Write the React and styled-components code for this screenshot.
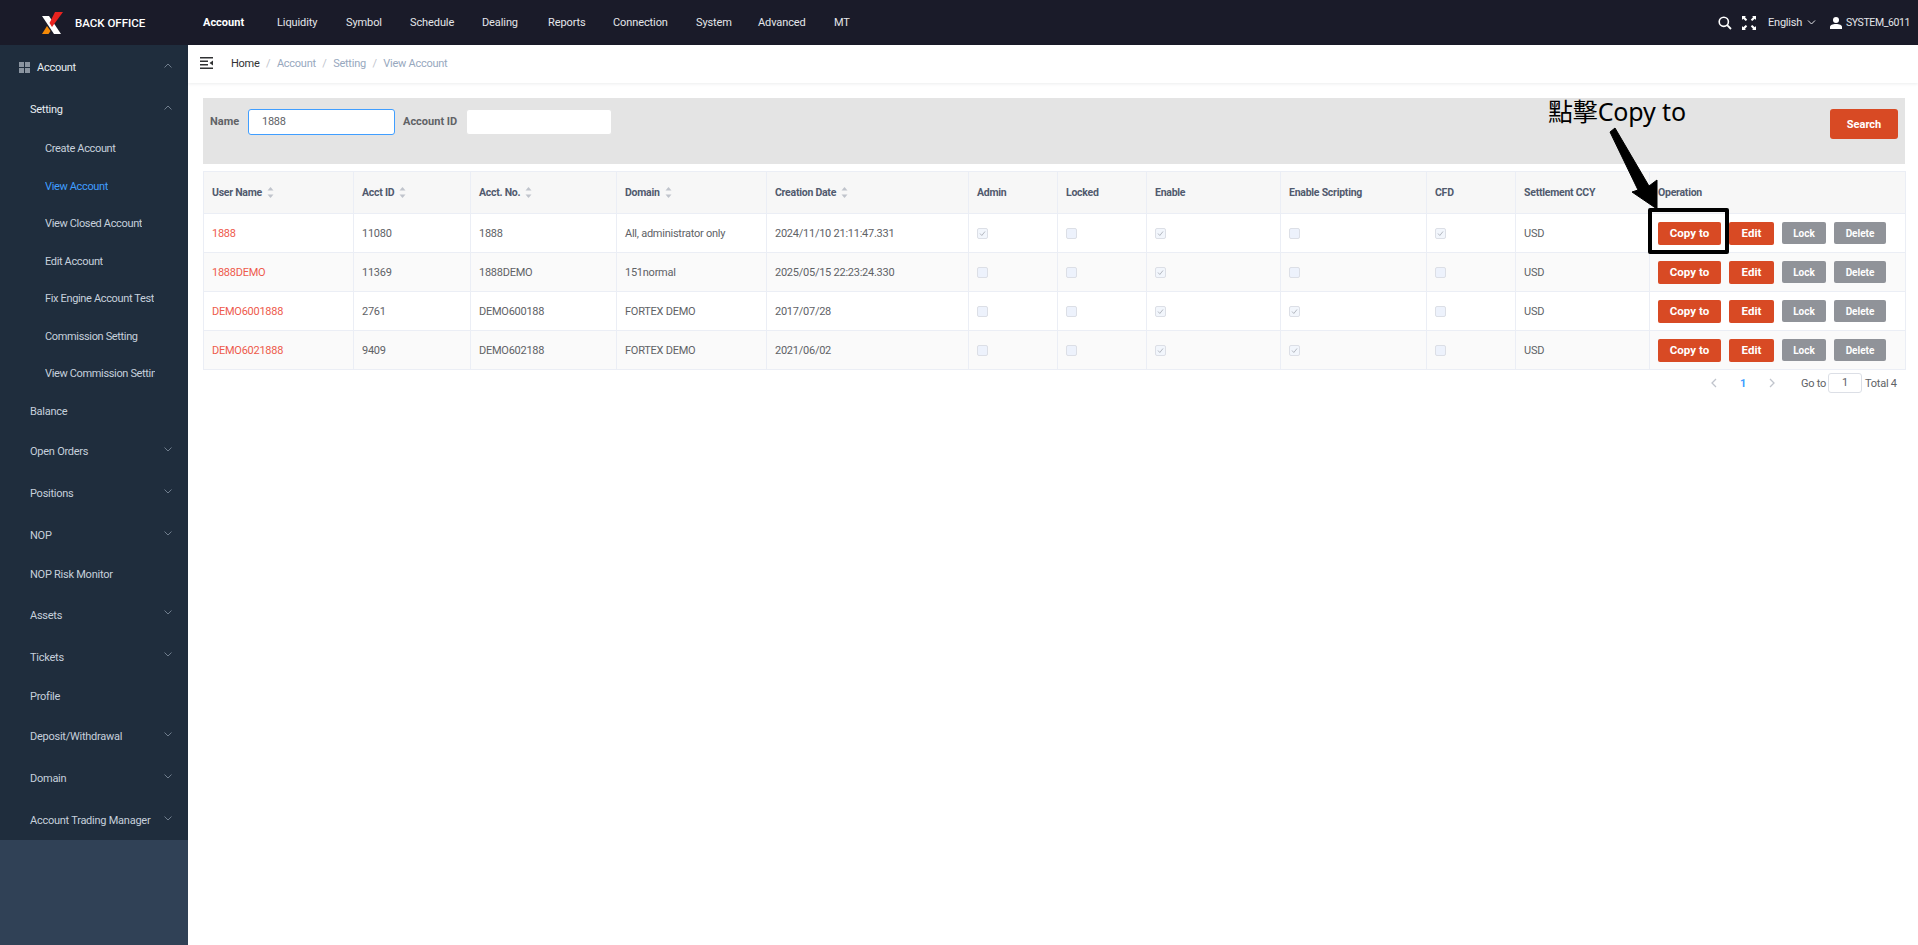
import React from "react";
import styled, { createGlobalStyle } from "styled-components";

const GlobalStyle = createGlobalStyle`
  html, body {
    margin: 0;
    padding: 0;
    background: #fff;
    font-family: Roboto, "Noto Sans", sans-serif;
    font-size: 11px;
    letter-spacing: -0.25px;
  }
  * {
    box-sizing: border-box;
  }
`;

const Page = styled.div`
  position: relative;
  width: 1918px;
  height: 945px;
  overflow: hidden;
  display: flex;
  flex-direction: column;
`;

const TopBar = styled.header`
  height: 45px;
  flex: none;
  background: #1a1b29;
  display: flex;
  align-items: center;
  color: #fff;
  padding-right: 8px;
`;

const Brand = styled.div`
  width: 203px;
  flex: none;
  display: flex;
  align-items: center;
  padding-left: 41px;
  gap: 10px;
  font-weight: 500;
  font-size: 11.500px;
  letter-spacing: 0;
`;

const TopNav = styled.nav`
  display: flex;
  flex: 1;
`;

const TopLink = styled.span`
  width: ${(p) => p.$w}px;
  color: ${(p) => (p.$active ? "#fff" : "#e4e6ea")};
  font-weight: ${(p) => (p.$active ? 700 : 400)};
  letter-spacing: ${(p) => (p.$active ? 0 : -0.1)}px;
`;

const TopRight = styled.div`
  display: flex;
  align-items: center;
  color: #e4e6ea;
`;

const UserName = styled.span`
  font-size: 10.500px;
  letter-spacing: -0.4px;
`;

const IconBtn = styled.span`
  display: flex;
  margin-right: ${(p) => p.$mr || 0}px;
`;

const Body = styled.div`
  flex: 1;
  display: flex;
  min-height: 0;
`;

const Sidebar = styled.aside`
  width: 188px;
  flex: none;
  background: #304156;
  color: #bfcbd9;
`;

const Menu = styled.div`
  background: #1f2d3d;
  height: 795px;
`;

const MenuRow = styled.div`
  height: ${(p) => (p.$leaf ? 37.5 : 42)}px;
  padding-left: ${(p) => p.$indent}px;
  padding-top: ${(p) => (p.$leaf ? 2 : 3)}px;
  display: flex;
  align-items: center;
  position: relative;
  color: ${(p) => p.$color || "#c6d0dc"};
  white-space: nowrap;
`;

// long names are cut at the arrow column, as the real menu does
const MenuText = styled.span`
  display: block;
  max-width: 110px;
  overflow: hidden;
  letter-spacing: -0.35px;
`;

const RootText = styled.span`
  display: block;
`;

const Chevron = styled.svg`
  position: absolute;
  right: 16px;
  top: 50%;
  margin-top: -3.500px;
  width: 8px;
  height: 5px;
`;

const GridIcon = styled.svg`
  width: 11px;
  height: 11px;
  margin-right: 7px;
`;

const Main = styled.main`
  flex: 1;
  min-width: 0;
`;

const Crumbs = styled.div`
  height: 38px;
  display: flex;
  align-items: center;
  padding-left: 12px;
  padding-bottom: 2px;
  box-shadow: 0 1px 3px rgba(0, 21, 41, 0.08);
`;

const Crumb = styled.span`
  color: ${(p) => (p.$home ? "#303133" : "#97a8be")};
`;

const CrumbSlash = styled.span`
  color: #c0c4cc;
  margin: 0 6.500px;
`;

const Hamburger = styled.svg`
  width: 13px;
  height: 12px;
  margin-right: 18px;
`;

const Content = styled.div`
  padding: 15px 13px 0 15px;
`;

const FilterBar = styled.div`
  height: 66px;
  background: #e4e4e4;
  display: flex;
  align-items: flex-start;
  padding: 11px 7px 0;
`;

const FilterLabel = styled.label`
  width: ${(p) => p.$w}px;
  line-height: 26px;
  font-weight: 700;
  letter-spacing: 0;
  color: #606266;
`;

const FilterInput = styled.div`
  width: ${(p) => p.$w}px;
  height: 26px;
  line-height: 24px;
  padding-left: 13px;
  margin-right: 8px;
  background: #fff;
  border-radius: 3px;
  border: 1px solid ${(p) => (p.$focus ? "#409eff" : "#e4e4e4")};
  color: #606266;
`;

const SearchButton = styled.button`
  margin-left: auto;
  width: 68px;
  height: 30px;
  border: none;
  border-radius: 3px;
  background: #d84a24;
  color: #fff;
  font: 700 11px Roboto, sans-serif;
`;

const Table = styled.table`
  margin-top: 7px;
  width: 1702px;
  table-layout: fixed;
  border-collapse: collapse;
`;

const ColWidth = styled.col`
  width: ${(p) => p.$w}px;
`;

const Th = styled.th`
  height: 42px;
  padding: 0 0 0 8px;
  background: #f7f7f7;
  border: 1px solid #ebeef5;
  color: #515a6e;
  font-size: 10.500px;
  font-weight: 700;
  text-align: left;
  white-space: nowrap;
`;

const Tr = styled.tr`
  background: ${(p) => (p.$even ? "#fafafa" : "#fff")};
`;

const Td = styled.td`
  height: 39px;
  padding: 0 0 0 8px;
  border: 1px solid #ebeef5;
  color: ${(p) => (p.$link ? "#ee5a4c" : "#606266")};
  white-space: nowrap;
`;

const SortCaret = styled.svg`
  width: 7px;
  height: 13px;
  margin-left: 5px;
  vertical-align: middle;
`;

const Check = styled.span`
  display: block;
  width: 11px;
  height: 11px;
  border: 1px solid #dcdfe6;
  border-radius: 2px;
  background: ${(p) => (p.$on ? "#f2f6fc" : "#edf2fc")};
`;

const CheckMark = styled.svg`
  display: block;
  width: 9px;
  height: 9px;
`;

const Actions = styled.div`
  display: flex;
  align-items: center;
  gap: 8px;
`;

const ActionButton = styled.button`
  width: ${(p) => p.$w}px;
  height: ${(p) => (p.$grey ? 22 : 23)}px;
  border: none;
  border-radius: 2px;
  padding: 0;
  background: ${(p) => (p.$grey ? "#909399" : "#d84a24")};
  color: #fff;
  font: 700 ${(p) => (p.$grey ? 10 : 11.5)}px Roboto, sans-serif;
`;

const Pager = styled.div`
  display: flex;
  align-items: center;
  margin-top: 3px;
  height: 20px;
  padding-left: 1508px;
  color: #606266;
  white-space: nowrap;
`;

const PagerArrow = styled.svg`
  width: 6px;
  height: 10px;
`;

const PagerCurrent = styled.span`
  color: #409eff;
  font-weight: 700;
  margin: 0 23px;
`;

const PagerLabel = styled.span`
  width: 27px;
  margin-left: ${(p) => p.$ml}px;
`;

const PagerInput = styled.div`
  width: 34px;
  height: 20px;
  margin-right: 3px;
  border: 1px solid #dcdfe6;
  border-radius: 3px;
  line-height: 18px;
  text-align: center;
`;

const Note = styled.div`
  position: absolute;
  left: 1548px;
  top: 94px;
  color: #000;
  font: 25px/1.4 "Noto Sans", "Noto Sans CJK TC", sans-serif;
  letter-spacing: -0.15px;
  white-space: nowrap;
`;

const HighlightBox = styled.div`
  position: absolute;
  left: 1648px;
  top: 208px;
  width: 81px;
  height: 46px;
  border: 4px solid #000;
  border-radius: 2px;
`;

const ArrowSvg = styled.svg`
  position: absolute;
  left: 1600px;
  top: 120px;
  width: 70px;
  height: 100px;
`;

const TOP_LINKS = [
  { text: "Account", w: 74 },
  { text: "Liquidity", w: 69 },
  { text: "Symbol", w: 64 },
  { text: "Schedule", w: 72 },
  { text: "Dealing", w: 66 },
  { text: "Reports", w: 65 },
  { text: "Connection", w: 83 },
  { text: "System", w: 62 },
  { text: "Advanced", w: 76 },
  { text: "MT", w: 30 },
];

const MENU = [
  { text: "Account", indent: 19, icon: true, open: true, color: "#e8edf2" },
  { text: "Setting", indent: 30, open: true, color: "#e8edf2" },
  { text: "Create Account", indent: 45, leaf: true },
  { text: "View Account", indent: 45, leaf: true, color: "#409eff" },
  { text: "View Closed Account", indent: 45, leaf: true },
  { text: "Edit Account", indent: 45, leaf: true },
  { text: "Fix Engine Account Test", indent: 45, leaf: true },
  { text: "Commission Setting", indent: 45, leaf: true },
  { text: "View Commission Setting", indent: 45, leaf: true },
  { text: "Balance", indent: 30, leaf: true },
  { text: "Open Orders", indent: 30 },
  { text: "Positions", indent: 30 },
  { text: "NOP", indent: 30 },
  { text: "NOP Risk Monitor", indent: 30, leaf: true },
  { text: "Assets", indent: 30 },
  { text: "Tickets", indent: 30 },
  { text: "Profile", indent: 30, leaf: true },
  { text: "Deposit/Withdrawal", indent: 30 },
  { text: "Domain", indent: 30 },
  { text: "Account Trading Manager", indent: 30 },
];

const COLUMNS = [
  { w: 150, title: "User Name", sort: true },
  { w: 117, title: "Acct ID", sort: true },
  { w: 146, title: "Acct. No.", sort: true },
  { w: 150, title: "Domain", sort: true },
  { w: 202, title: "Creation Date", sort: true },
  { w: 89, title: "Admin" },
  { w: 89, title: "Locked" },
  { w: 134, title: "Enable" },
  { w: 146, title: "Enable Scripting" },
  { w: 89, title: "CFD" },
  { w: 134, title: "Settlement CCY" },
  { w: 256, title: "Operation" },
];

const ROWS = [
  { name: "1888", id: "11080", no: "1888", domain: "All, administrator only", date: "2024/11/10 21:11:47.331", checks: [1, 0, 1, 0, 1] },
  { name: "1888DEMO", id: "11369", no: "1888DEMO", domain: "151normal", date: "2025/05/15 22:23:24.330", checks: [0, 0, 1, 0, 0] },
  { name: "DEMO6001888", id: "2761", no: "DEMO600188", domain: "FORTEX DEMO", date: "2017/07/28", checks: [0, 0, 1, 1, 0] },
  { name: "DEMO6021888", id: "9409", no: "DEMO602188", domain: "FORTEX DEMO", date: "2021/06/02", checks: [0, 0, 1, 1, 0] },
];

const ChevronIcon = ({ up }) => (
  <Chevron viewBox="0 0 8 5">
    <path d={up ? "M.5 4.500 4 1l3.500 3.500" : "M.5.5 4 4 7.500.5"} fill="none" stroke="#6f7d8d" strokeWidth="1" />
  </Chevron>
);

const Logo = () => (
  <svg width="24" height="24" viewBox="0 0 24 24">
    <path d="M1 5h7l12 18h-7z" fill="#fff" />
    <path d="M14 1h8L11 16 8.500 12z" fill="#e8231f" />
    <path d="M1 23l5-8 3.500 5-2 3z" fill="#f58a07" />
  </svg>
);

const SearchIcon = () => (
  <svg width="14" height="14" viewBox="0 0 14 14">
    <circle cx="5.800" cy="5.800" r="4.600" fill="none" stroke="#fff" strokeWidth="1.600" />
    <path d="M9.200 9.200 13 13" stroke="#fff" strokeWidth="1.800" />
  </svg>
);

const FullscreenIcon = () => (
  <svg width="14" height="14" viewBox="0 0 14 14">
    <path d="M0 0h4L2.900 1.100 5.200 3.700 3.800 5 1.200 2.800 0 4zM14 0v4l-1.200-1.200L10.200 5 8.800 3.700l2.300-2.600L10 0zM0 14v-4l1.200 1.200L3.800 9l1.400 1.300-2.300 2.600L4 14zM14 14h-4l1.100-1.100-2.300-2.600L10.200 9l2.600 2.200L14 10z" fill="#fff" />
  </svg>
);

const UserIcon = () => (
  <svg width="12" height="12" viewBox="0 0 12 12">
    <circle cx="6" cy="3" r="3" fill="#fff" />
    <path d="M0 12V10c0-2 2.500-3 6-3s6 1 6 3v2z" fill="#fff" />
  </svg>
);

const SortIcon = () => (
  <SortCaret viewBox="0 0 7 13">
    <path d="M3.500 1 6.500 4.500h-6z" fill="#c0c4cc" />
    <path d="M3.500 12 .5 8.500h6z" fill="#c0c4cc" />
  </SortCaret>
);

const CheckBox = ({ on }) => (
  <Check $on={on}>
    {on ? (
      <CheckMark viewBox="0 0 9 9">
        <path d="M2 4.500 3.800 6.500 7 2.500" fill="none" stroke="#b4b8c0" strokeWidth="1" />
      </CheckMark>
    ) : null}
  </Check>
);

const App = () => {
  return (
    <Page>
      <GlobalStyle />
      <TopBar>
        <Brand>
          <Logo />
          BACK OFFICE
        </Brand>
        <TopNav>
          {TOP_LINKS.map((link, i) => (
            <TopLink key={link.text} $w={link.w} $active={i === 0}>
              {link.text}
            </TopLink>
          ))}
        </TopNav>
        <TopRight>
          <IconBtn $mr={10}>
            <SearchIcon />
          </IconBtn>
          <IconBtn $mr={12}>
            <FullscreenIcon />
          </IconBtn>
          <span>English</span>
          <IconBtn $mr={14}>
            <svg width="14" height="6" viewBox="0 0 14 6">
              <path d="M6 .5 9.500 4 13 .5" fill="none" stroke="#e4e6ea" strokeWidth="1" />
            </svg>
          </IconBtn>
          <IconBtn $mr={4}>
            <UserIcon />
          </IconBtn>
          <UserName>SYSTEM_6011</UserName>
        </TopRight>
      </TopBar>
      <Body>
        <Sidebar>
          <Menu>
            {MENU.map((item) => (
              <MenuRow key={item.text} $leaf={item.leaf} $indent={item.indent} $color={item.color}>
                {item.icon ? (
                  <GridIcon viewBox="0 0 11 11">
                    <path d="M0 0h5v5H0zM6 0h5v5H6zM0 6h5v5H0zM6 6h5v5H6z" fill="#8a94a0" />
                  </GridIcon>
                ) : null}
                {item.indent === 45 ? <MenuText>{item.text}</MenuText> : <RootText>{item.text}</RootText>}
                {item.leaf ? null : <ChevronIcon up={item.open} />}
              </MenuRow>
            ))}
          </Menu>
        </Sidebar>
        <Main>
          <Crumbs>
            <Hamburger viewBox="0 0 13 12">
              <path d="M0 0h13v1.500H0zM0 3.500h8V5H0zM0 7h8v1.500H0zM0 10.500h13V12H0z" fill="#303133" />
              <path d="M13 3.500v5L9.500 6z" fill="#303133" />
            </Hamburger>
            <Crumb $home>Home</Crumb>
            <CrumbSlash>/</CrumbSlash>
            <Crumb>Account</Crumb>
            <CrumbSlash>/</CrumbSlash>
            <Crumb>Setting</Crumb>
            <CrumbSlash>/</CrumbSlash>
            <Crumb>View Account</Crumb>
          </Crumbs>
          <Content>
            <FilterBar>
              <FilterLabel $w={38}>Name</FilterLabel>
              <FilterInput $w={147} $focus>
                1888
              </FilterInput>
              <FilterLabel $w={63}>Account ID</FilterLabel>
              <FilterInput $w={146} />
              <SearchButton>Search</SearchButton>
            </FilterBar>
            <Table>
              <colgroup>
                {COLUMNS.map((col) => (
                  <ColWidth key={col.title} $w={col.w} />
                ))}
              </colgroup>
              <thead>
                <tr>
                  {COLUMNS.map((col) => (
                    <Th key={col.title}>
                      {col.title}
                      {col.sort ? <SortIcon /> : null}
                    </Th>
                  ))}
                </tr>
              </thead>
              <tbody>
                {ROWS.map((row, i) => (
                  <Tr key={row.name} $even={i % 2 === 1}>
                    <Td $link>{row.name}</Td>
                    <Td>{row.id}</Td>
                    <Td>{row.no}</Td>
                    <Td>{row.domain}</Td>
                    <Td>{row.date}</Td>
                    {row.checks.map((on, j) => (
                      <Td key={j}>
                        <CheckBox on={!!on} />
                      </Td>
                    ))}
                    <Td>USD</Td>
                    <Td>
                      <Actions>
                        <ActionButton $w={63}>Copy to</ActionButton>
                        <ActionButton $w={45}>Edit</ActionButton>
                        <ActionButton $w={44} $grey>
                          Lock
                        </ActionButton>
                        <ActionButton $w={52} $grey>
                          Delete
                        </ActionButton>
                      </Actions>
                    </Td>
                  </Tr>
                ))}
              </tbody>
            </Table>
            <Pager>
              <PagerArrow viewBox="0 0 6 10">
                <path d="M5 1 1 5l4 4" fill="none" stroke="#c0c4cc" strokeWidth="1.300" />
              </PagerArrow>
              <PagerCurrent>1</PagerCurrent>
              <PagerArrow viewBox="0 0 6 10">
                <path d="M1 1l4 4-4 4" fill="none" stroke="#c0c4cc" strokeWidth="1.300" />
              </PagerArrow>
              <PagerLabel $ml={26}>Go to</PagerLabel>
              <PagerInput>1</PagerInput>
              <span>Total 4</span>
            </Pager>
          </Content>
        </Main>
      </Body>
      <Note>點擊Copy to</Note>
      <ArrowSvg viewBox="0 0 70 100">
        <path d="M10 12 15 8 49 66 57 60V89L32 72 38 70z" fill="#000" stroke="#000" strokeWidth="1" strokeLinejoin="round" />
      </ArrowSvg>
      <HighlightBox />
    </Page>
  );
};

export default App;
